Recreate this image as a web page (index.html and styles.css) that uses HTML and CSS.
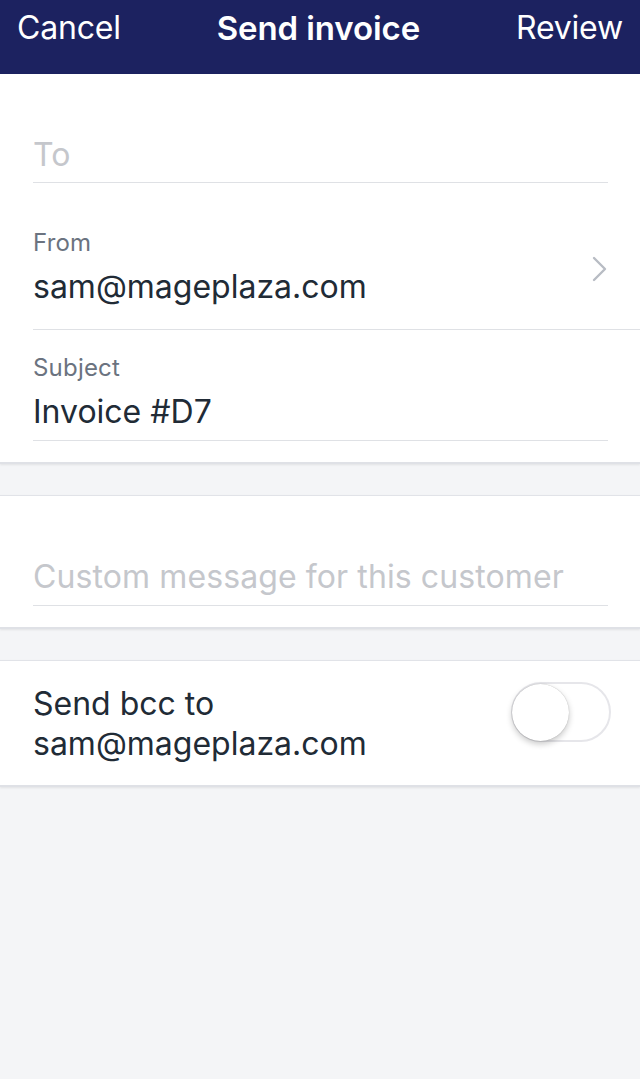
FILE: index.html
```html
<!DOCTYPE html>
<html>
<head>
<meta charset="utf-8">
<link rel="stylesheet" href="styles.css">
</head>
<body>
<header class="nav">
  <span class="nav-btn">Cancel</span>
  <span class="nav-title">Send invoice</span>
  <span class="nav-btn">Review</span>
</header>

<section class="card card-first">
  <div class="field field-to">
    <div class="placeholder">To</div>
  </div>
  <div class="field field-from">
    <div class="field-text">
      <div class="label">From</div>
      <div class="value">sam@mageplaza.com</div>
    </div>
    <svg class="chevron" width="16" height="26" viewBox="0 0 16 26"><path d="M2 2 L13 13 L2 24" fill="none" stroke="#b8bcc4" stroke-width="2.4" stroke-linecap="round" stroke-linejoin="round"/></svg>
  </div>
  <div class="field field-subject">
    <div class="label">Subject</div>
    <div class="value">Invoice #D7</div>
  </div>
</section>

<section class="card card-msg">
  <div class="field field-msg">
    <div class="placeholder">Custom message for this customer</div>
  </div>
</section>

<section class="card card-bcc">
  <div class="bcc-row">
    <div class="bcc-text">Send bcc to<br>sam@mageplaza.com</div>
    <div class="toggle"><div class="knob"></div></div>
  </div>
</section>
</body>
</html>
```

FILE: styles.css
```css
* { box-sizing: border-box; }
html, body { margin: 0; padding: 0; }
body {
  width: 640px;
  height: 1079px;
  background: #f4f5f7;
  font-family: Inter, "Noto Sans", sans-serif;
  color: #212b36;
  overflow: hidden;
}
.nav {
  height: 74px;
  background: #1c2260;
  display: flex;
  justify-content: space-between;
  align-items: flex-start;
  padding: 8px 17px 0 17px;
  color: #fff;
  font-size: 32px;
}
.nav-btn { font-weight: 400; letter-spacing: -0.2px; }
.nav-title { font-weight: 600; font-size: 33px; letter-spacing: -0.1px; }

.card {
  background: #fff;
  border-bottom: 2px solid #dfe1e6;
  box-shadow: 0 1px 2px rgba(0,0,0,0.08);
}
.card-msg, .card-bcc { border-top: 1px solid #e1e3e8; }
.card-first { padding-bottom: 21px; }
.card-msg { margin-top: 31px; padding-bottom: 21px; }
.card-bcc { margin-top: 31px; }

.field { margin-left: 33px; border-bottom: 1px solid #dfe1e5; }
.field-to { margin-right: 32px; height: 109px; padding-top: 61px; }
.placeholder { color: #c5c7cc; font-size: 32px; line-height: 40px; letter-spacing: 0.1px; }
.field-from {
  height: 147px;
  display: flex;
  align-items: flex-start;
  justify-content: space-between;
  padding-top: 45px;
  padding-right: 32px;
}
.chevron { margin-top: 28px; }
.label { color: #6b7380; font-size: 24px; line-height: 30px; letter-spacing: 0.2px; }
.value { font-size: 32px; line-height: 40px; margin-top: 9px; letter-spacing: 0; }
.field-subject { margin-right: 32px; height: 111px; padding-top: 23px; }
.field-subject .value { margin-top: 9px; }

.field-msg { margin-right: 32px; height: 110px; padding-top: 61px; }

.bcc-row {
  margin-left: 33px;
  height: 124px;
  display: flex;
  justify-content: space-between;
  align-items: center;
  padding-right: 29px;
}
.bcc-text { font-size: 32px; line-height: 40px; letter-spacing: 0; margin-top: 2px; }
.toggle {
  width: 100px;
  height: 60px;
  border-radius: 30px;
  border: 2px solid #e6e6ea;
  background: #fff;
  position: relative;
  margin-top: -22px;
}
.knob {
  position: absolute;
  left: -1px;
  top: 0px;
  width: 57px;
  height: 57px;
  border-radius: 50%;
  background: #fff;
  box-shadow: 0 3px 6px rgba(0,0,0,0.22), 0 0 1px rgba(0,0,0,0.3);
}
```
